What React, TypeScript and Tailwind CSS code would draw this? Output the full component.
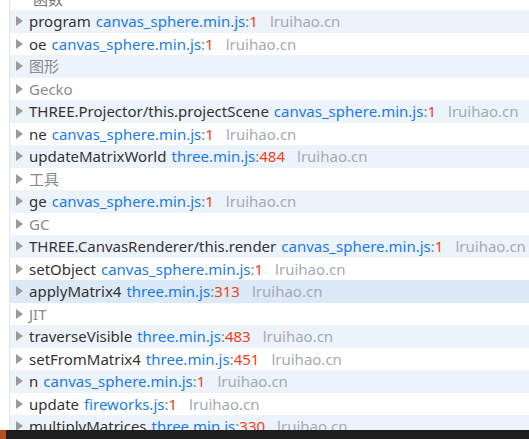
type Row = {
  name: string;
  file?: string;
  line?: string;
  cat?: boolean;
  selected?: boolean;
};

const rows: Row[] = [
  { name: "program", file: "canvas_sphere.min.js", line: "1" },
  { name: "oe", file: "canvas_sphere.min.js", line: "1" },
  { name: "图形", cat: true },
  { name: "Gecko", cat: true },
  { name: "THREE.Projector/this.projectScene", file: "canvas_sphere.min.js", line: "1" },
  { name: "ne", file: "canvas_sphere.min.js", line: "1" },
  { name: "updateMatrixWorld", file: "three.min.js", line: "484" },
  { name: "工具", cat: true },
  { name: "ge", file: "canvas_sphere.min.js", line: "1" },
  { name: "GC", cat: true },
  { name: "THREE.CanvasRenderer/this.render", file: "canvas_sphere.min.js", line: "1" },
  { name: "setObject", file: "canvas_sphere.min.js", line: "1" },
  { name: "applyMatrix4", file: "three.min.js", line: "313", selected: true },
  { name: "JIT", cat: true },
  { name: "traverseVisible", file: "three.min.js", line: "483" },
  { name: "setFromMatrix4", file: "three.min.js", line: "451" },
  { name: "n", file: "canvas_sphere.min.js", line: "1" },
  { name: "update", file: "fireworks.js", line: "1" },
  { name: "multiplyMatrices", file: "three.min.js", line: "330" },
];

const Triangle = () => (
  <svg width="7" height="10" viewBox="0 0 7 10" className="shrink-0">
    <path d="M0 0 L7 5 L0 10 Z" fill="#9a9a9a" />
  </svg>
);

const TreeRow = ({ row, index }: { row: Row; index: number }) => {
  const bg = row.selected
    ? "bg-[#dce9f6]"
    : index % 2 === 0
    ? "bg-[#edf3fa]"
    : "bg-white";
  return (
    <div className={`h-[22.5px] flex items-center pl-[15px] whitespace-nowrap ${bg}`}>
      <Triangle />
      {row.cat ? (
        <span className="ml-[6px] text-[#8a8a8a]">{row.name}</span>
      ) : (
        <>
          <span className="ml-[6px] text-[#333]">{row.name}</span>
          <span className="ml-[5px] text-[#1a7ae6]">{row.file}</span>
          <span className="text-[#8a8a8a]">:</span>
          <span className="text-[#f0401a]">{row.line}</span>
          <span className="ml-[12px] text-[#a3aab4]">lruihao.cn</span>
        </>
      )}
    </div>
  );
};

export default function App() {
  return (
    <div
      className="w-[529px] h-[439px] overflow-hidden bg-white flex flex-col text-[15px]"
      style={{ fontFamily: '"Noto Sans", "Noto Sans CJK SC", sans-serif' }}
    >
      <div className="flex-1 overflow-hidden border-l border-[#e3e6ea] ml-[9px] -mt-[12.5px]">
        <div className="-ml-[9px]">
          {/* 列头，被滚动截断 */}
          <div className="h-[22.5px] flex items-center pl-[32px] text-[#777] bg-white">函数</div>
          {rows.map((r, i) => (
            <TreeRow key={i} row={r} index={i} />
          ))}
        </div>
      </div>
      {/* 底部深色条 */}
      <div className="h-[9px] shrink-0 bg-[#1e1e1e] flex">
        <div className="w-[6px] bg-[#b5501e]" />
      </div>
    </div>
  );
}
